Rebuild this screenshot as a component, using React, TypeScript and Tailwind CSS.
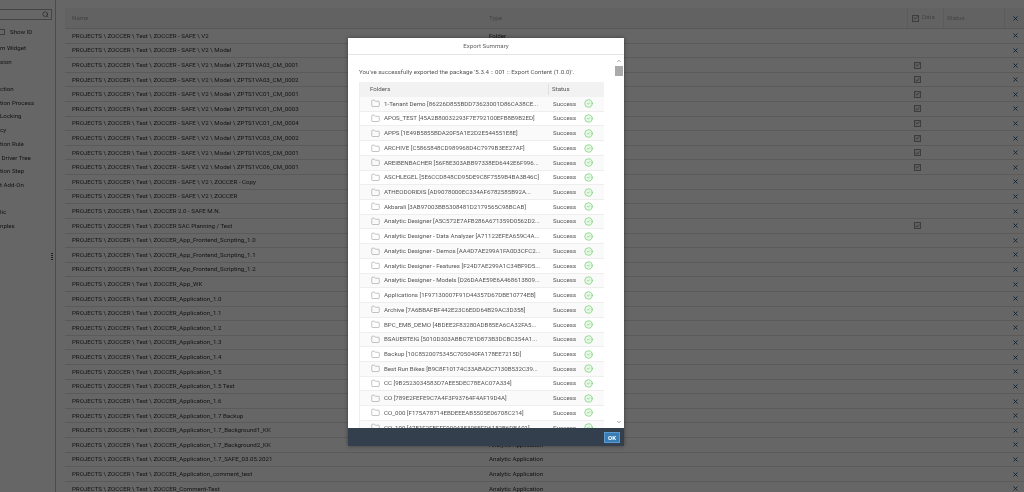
import { Search, X, Check, Folder, CircleCheck, ChevronUp, ChevronDown } from 'lucide-react'

const TREE = [
  { label: 'm Widget', cls: 'mt-[5px]' },
  { label: 'sion', cls: 'mt-[0px]' },
  { label: 'ction', cls: 'mt-[13.5px]' },
  { label: 'tion Process', cls: '' },
  { label: 'Locking', cls: '' },
  { label: 'cy', cls: '' },
  { label: 'tion Rule', cls: '' },
  { label: ' Driver Tree', cls: '' },
  { label: 'tion Step', cls: '' },
  { label: 't Add-On', cls: '' },
  { label: 'lic', cls: 'mt-[13.5px]' },
  { label: 'nples', cls: '' },
]

const base = 'PROJECTS \\ ZOCCER \\ Test \\ '
const safe = base + 'ZOCCER - SAFE \\ V2'
const app = base + 'ZOCCER_Application_'

const ROWS = [
  { name: safe, type: 'Folder' },
  { name: safe + ' \\ Model', type: 'Folder' },
  { name: safe + ' \\ Model \\ ZPTS1VA03_CM_0001', checked: true },
  { name: safe + ' \\ Model \\ ZPTS1VA03_CM_0002', checked: true },
  { name: safe + ' \\ Model \\ ZPTS1VC01_CM_0001', checked: true },
  { name: safe + ' \\ Model \\ ZPTS1VC01_CM_0003', checked: true },
  { name: safe + ' \\ Model \\ ZPTS1VC01_CM_0004', checked: true },
  { name: safe + ' \\ Model \\ ZPTS1VC03_CM_0002', checked: true },
  { name: safe + ' \\ Model \\ ZPTS1VC05_CM_0001', checked: true },
  { name: safe + ' \\ Model \\ ZPTS1VC06_CM_0001', checked: true },
  { name: safe + ' \\ ZOCCER - Copy' },
  { name: safe + ' \\ ZOCCER' },
  { name: base + 'ZOCCER 2.0 - SAFE M.N.' },
  { name: base + 'ZOCCER SAC Planning / Test', checked: true },
  { name: base + 'ZOCCER_App_Frontend_Scripting_1.0' },
  { name: base + 'ZOCCER_App_Frontend_Scripting_1.1' },
  { name: base + 'ZOCCER_App_Frontend_Scripting_1.2' },
  { name: base + 'ZOCCER_App_WK' },
  { name: app + '1.0' },
  { name: app + '1.1' },
  { name: app + '1.2' },
  { name: app + '1.3' },
  { name: app + '1.4' },
  { name: app + '1.5' },
  { name: app + '1.5 Test' },
  { name: app + '1.6' },
  { name: app + '1.7 Backup' },
  { name: app + '1.7_Background1_KK', type: 'Analytic Application' },
  { name: app + '1.7_Background2_KK', type: 'Analytic Application' },
  { name: app + '1.7_SAFE_03.05.2021', type: 'Analytic Application' },
  { name: app + 'comment_test', type: 'Analytic Application' },
  { name: base + 'ZOCCER_Comment-Test', type: 'Analytic Application' },
]

const FOLDERS = [
  '1-Tenant Demo [86226D855BDD73623001D86CA38CE...',
  'APOS_TEST [45A2B80032293F7E792100EFB8B9B2ED]',
  'APPS [1E49B5855BDA20F5A1E2D2E544551E8E]',
  'ARCHIVE [C5865848CD989968D4C7979B3EE27AF]',
  'AREIBENBACHER [56F8E303ABB97338ED6442E6F996...',
  'ASCHLEGEL [5E6CCD848CD95DE9C8F7559B4BA3B46C]',
  'ATHEODORIDIS [AD9078000EC334AF6782585B92A...',
  'Akbarali [3AB97003BB5308481D2179565C98BCAB]',
  'Analytic Designer [A5C572E7AFB286A671359D0562D2...',
  'Analytic Designer - Data Analyzer [A71122EFEA659C4A...',
  'Analytic Designer - Demos [AA4D7AE299A1FA0D3CFC2...',
  'Analytic Designer - Features [F24D7AE299A1C34BF9D5...',
  'Analytic Designer - Models [D26DAAE59E6A468613809...',
  'Applications [1F97130007F91D44357D67DBE10774EB]',
  'Archive [7A6BBAFBF442E23C6EDD64B29AC3D358]',
  'BPC_EMB_DEMO [4BDEE2F83280ADB85EA6CA32FA5...',
  'BSAUERTEIG [5010D303ABBC7E1D873B3DCBC354A1...',
  'Backup [10C8520075345C705040FA178EE7215D]',
  'Best Run Bikes [B9C8F10174C33ABADC7130B532C39...',
  'CC [9B2523034583D7AEE5DEC78EAC07A334]',
  'CO [789E2FEFE9C7A4F3F93764F4AF19D4A]',
  'CO_000 [F175A78714EBDEEEAB5505E06708C214]',
  'CO_100 [47E1F2FEFFF990435305EFD6182B6DBA01]',
]

function DataCheck() {
  return (
    <span className="flex h-[7px] w-[7px] items-center justify-center border border-[#999] bg-[#eee]">
      <Check size={6} strokeWidth={3} className="text-[#2b6a9e]" />
    </span>
  )
}

export default function App() {
  return (
    <div className="relative h-[492px] w-[1024px] overflow-hidden bg-white font-['Roboto',sans-serif] text-[6.15px] text-[#333] blur-[0.35px]">
      <div className="flex h-full">
        {/* Sidebar */}
        <div className="relative flex h-full w-[56px] shrink-0 flex-col border-r border-[#bbb] pt-[9px]">
          <div className="flex h-[11px] w-[52px] items-center justify-end border border-l-0 border-[#aaa] pr-[2px]">
            <Search size={7} className="text-[#4a4a4a]" />
          </div>
          <div className="mt-[7px] flex h-[10px] items-center">
            <span className="-ml-[1px] h-[6px] w-[6px] border border-[#999]" />
            <span className="ml-[5px] pt-[1px]">Show ID</span>
          </div>
          {TREE.map((t) => (
            <div key={t.label} className={`flex h-[13.7px] items-center whitespace-pre ${t.cls}`}>
              {t.label}
            </div>
          ))}
          <div className="absolute right-[2px] top-[253px] flex flex-col gap-[1px]">
            {[0, 1, 2, 3].map((i) => (
              <span key={i} className="h-[1px] w-[2px] bg-[#555]" />
            ))}
          </div>
        </div>

        {/* Content table */}
        <div className="ml-[9px] min-w-0 flex-1 pt-[8px]">
          <div className="flex h-[21px] items-center border-b border-[#ddd] bg-[#f4f4f4] text-[#aaa]">
            <span className="w-[424px] pl-[7px] pt-[1px]">Name</span>
            <span className="w-[418px] pt-[1px]">Type</span>
            <span className="flex h-full w-[36px] items-center gap-[3px] border-l border-[#e4e4e4] pl-[4px]">
              <DataCheck />
              Data
            </span>
            <span className="flex h-full w-[62px] items-center border-x border-[#e4e4e4] pl-[3px] pt-[1px]">Status</span>
            <span className="flex flex-1 justify-center pl-[1px]">
              <X size={7} strokeWidth={3} className="text-[#1f4f7a]" />
            </span>
          </div>
          {ROWS.map((r) => (
            <div key={r.name} className="flex h-[14.62px] items-center border-b border-[#e2e2e2]">
              <span className="w-[424px] shrink-0 pl-[7px] pt-[1px] whitespace-nowrap">{r.name}</span>
              <span className="w-[418px] shrink-0 pt-[1px]">{r.type}</span>
              <span className="flex w-[36px] shrink-0 pl-[7px]">{r.checked && <DataCheck />}</span>
              <span className="w-[62px] shrink-0" />
              <span className="flex flex-1 justify-center pl-[1px]">
                <X size={7} strokeWidth={3} className="text-[#1f4f7a]" />
              </span>
            </div>
          ))}
        </div>
      </div>

      {/* Dim layer */}
      <div className="absolute inset-0 bg-black/60" />

      {/* Export dialog */}
      <div className="absolute left-[348px] top-[38px] flex h-[408px] w-[276px] flex-col bg-white shadow-[0_0_4px_rgba(0,0,0,0.4)]">
        <div className="flex h-[17px] shrink-0 items-center justify-center border-b border-[#e5e5e5] pt-[2px] text-[#666]">
          Export Summary
        </div>
        <div className="relative min-h-0 flex-1 overflow-hidden pl-[11px] pr-[20px] pt-[11px]">
          <p className="h-[16px] pt-[1px] leading-[10px] whitespace-nowrap text-[#555]">
            You've successfully exported the package '5.3.4 :: 001 :: Export Content (1.0.0)'.
          </p>
          <div className="w-[245px] border-l border-[#eee] text-[#555]">
            <div className="flex h-[15px] items-center bg-[#f2f2f2]">
              <span className="w-[189px] border-r border-[#e0e0e0] pl-[10px] pt-[1px]">Folders</span>
              <span className="pl-[3px] pt-[1px]">Status</span>
            </div>
            {FOLDERS.map((f, i) => (
              <div
                key={f}
                className={`flex h-[14.73px] items-center border-b border-[#eee] ${i % 2 === 0 ? 'bg-[#fafafa]' : 'bg-white'}`}
              >
                <Folder size={9} strokeWidth={1} className="ml-[11px] shrink-0 text-[#666]" />
                <span className="ml-[4px] w-[169px] shrink-0 truncate pt-[1px]">{f}</span>
                <span className="w-[31px] shrink-0 pt-[1px]">Success</span>
                <CircleCheck size={9} strokeWidth={1.6} className="fill-[#e6f8e6] text-[#62c862]" />
              </div>
            ))}
          </div>
          {/* Scrollbar */}
          <div className="absolute right-[1px] top-0 flex h-full w-[9px] flex-col items-center justify-between py-[3px]">
            <ChevronUp size={6} strokeWidth={3} className="text-[#888]" />
            <ChevronDown size={6} strokeWidth={3} className="text-[#888]" />
          </div>
          <div className="absolute right-[1px] top-[11px] h-[10px] w-[8px] bg-[#aaa]" />
        </div>
        <div className="flex h-[18px] shrink-0 items-center justify-end bg-[#333f4c] pr-[4px]">
          <button className="flex h-[11px] w-[16px] items-center justify-center border border-[#5c9ad0] bg-[#3a7db5] text-[6px] font-bold text-white">
            OK
          </button>
        </div>
      </div>
    </div>
  )
}
